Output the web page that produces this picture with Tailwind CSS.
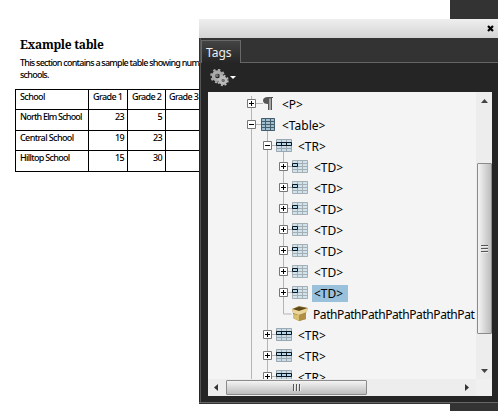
<!DOCTYPE html>
<html lang="en"><head><meta charset="utf-8"><title>Tags panel</title>
<script src="https://cdn.jsdelivr.net/npm/@tailwindcss/browser@4"></script></head>
<body class="relative h-[411px] w-[498px] overflow-hidden bg-white text-black">
<svg class="hidden">
  <symbol id="plus" viewBox="0 0 9 9"><path d="M.5.5h8v8h-8z" fill="#fff" stroke="#777"/><path d="M2 4.5h5M4.5 2v5" stroke="#000"/></symbol>
  <symbol id="minus" viewBox="0 0 9 9"><path d="M.5.5h8v8h-8z" fill="#fff" stroke="#777"/><path d="M2 4.5h5" stroke="#000"/></symbol>
  <symbol id="tr" viewBox="0 0 16 13"><path d="M0 0h16v13H0z" fill="#c9dce8"/><path d="M.5.5h15v12H.5zM5.500 0v13M10.500 0v13M0 9.500h16" fill="none" stroke="#9aa9b1"/><path d="M.5 3.500h15v3H.5zM5.500 3v4M10.500 3v4" fill="#b4d4e8" stroke="#0a1620"/></symbol>
  <symbol id="td" viewBox="0 0 16 13"><path d="M0 0h16v13H0z" fill="#d3e3eb"/><path d="M.5.500h15v12H.5zM5.500 0v13M10.500 0v13M0 3.500h16M0 6.500h16M0 9.500h16" fill="none" stroke="#a3afb4"/><path d="M.5 3.500h5v3h-5z" fill="#b4d9ee" stroke="#0a1620"/></symbol>
</svg>
<main class="h-[411px] w-[199px] overflow-hidden pl-[15px] pt-[36px] font-['Noto_Sans',sans-serif] text-[9px] font-medium">
  <h1 class="h-[20px] w-[120px] whitespace-nowrap pl-[5px] font-['Noto_Serif','DejaVu_Serif','Liberation_Serif',serif] text-[12px] font-bold leading-[18px] tracking-[-0.3px]">Example table</h1>
  <p class="h-[33px] whitespace-nowrap pl-[5px] pt-px leading-[11.500px] tracking-[-0.76px]">This section contains a sample table showing num<br>schools.</p>
  <div class="grid w-[190px] grid-cols-[73px_39px_38px_40px] grid-rows-[20px_21px_20px_21px] border-b border-l border-black leading-[13px] tracking-[-0.6px] whitespace-nowrap *:border-t *:border-r *:border-black">
    <div class="pl-1">School</div><div class="pl-1">Grade 1</div><div class="pl-1">Grade 2</div><div class="pl-[3px]">Grade 3</div>
    <div class="pl-1 tracking-[-0.8px]">North Elm School</div><div class="pr-[3px] text-right">23</div><div class="pr-[3px] text-right">5</div><div></div>
    <div class="pl-1">Central School</div><div class="pr-[3px] text-right">19</div><div class="pr-[3px] text-right">23</div><div></div>
    <div class="pl-1 tracking-[-0.7px]">Hilltop School</div><div class="pr-[3px] text-right">15</div><div class="pr-[3px] text-right">30</div><div></div>
  </div>
</main>
<div class="absolute right-0 top-0 h-[411px] w-[48px] bg-[#333]"></div>
<section class="absolute left-[199px] top-[19px] flex h-[385px] w-[299px] flex-col bg-[#252525] font-['Noto_Sans',sans-serif] text-[12px]">
  <div class="flex h-[19px] shrink-0 items-center justify-end bg-linear-to-b from-[#efefef] to-[#d4d4d4] pr-[4px]">
    <svg class="h-[7px] w-[7px]" viewBox="0 0 7 7"><path d="M1 1l5 5M6 1L1 6" stroke="#000" stroke-width="2.200"/></svg>
  </div>
  <div class="flex h-[25px] shrink-0 bg-[#333] pt-[2px]">
    <div class="w-[2px] border-b border-[#666]"></div>
    <div class="w-[40px] border-l border-r border-t border-[#686868] bg-linear-to-b from-[#444] to-[#252525] pl-[4px] text-[12px] leading-[23px] text-[#eee]">Tags</div>
    <div class="flex-1 border-b border-[#666]"></div>
  </div>
  <div class="flex h-[29px] shrink-0 items-center pl-[11px]">
    <svg class="h-[18px] w-[19px]" viewBox="0 0 19 18">
      <g fill="none" stroke="#aaa"><circle cx="7.500" cy="7" r="4" stroke-width="3.500"/><circle cx="7.500" cy="7" r="6.300" stroke-width="2" stroke-dasharray="2.400 2.500"/></g>
      <g fill="none" stroke="#bbb"><circle cx="13" cy="11.500" r="3" stroke-width="2.800"/><circle cx="13" cy="11.500" r="4.800" stroke-width="1.800" stroke-dasharray="1.900 1.870"/></g><circle cx="7" cy="6.500" r="1.500" fill="#777"/><circle cx="13" cy="11.500" r="1.400" fill="#777"/>
    </svg>
    <svg class="ml-px h-[3px] w-[6px]" viewBox="0 0 6 3"><path d="M0 0h6L3 3z" fill="#fff"/></svg>
  </div>
  <div class="ml-[9px] grid h-[304px] w-[284px] grid-cols-[268px_16px] grid-rows-[287px_17px] bg-[#f4f4f4]">
    <div class="relative overflow-hidden">
      <svg class="absolute left-0 top-0 h-[287px] w-[268px]" viewBox="0 0 268 287"><path d="M43.500 4v283M59.500 38v249M75.500 59v163h8M47 11.500h8M47 32.500h7M63 53.500h5M79 74.500h5M79 95.500h5M79 116.500h5M79 137.500h5M79 158.500h5M79 179.500h5M79 200.500h5M63 242.500h5M63 263.500h5M63 284.500h5" fill="none" stroke="#b5b5b5"/></svg>
      <div class="relative flex flex-col pt-px whitespace-nowrap *:flex *:h-[21px] *:shrink-0 *:items-center">
        <div class="pl-[39px]"><svg class="h-[9px] w-[9px]"><use href="#plus"/></svg><svg class="ml-[6px] h-[13px] w-[12px]" viewBox="0 0 12 13"><path d="M6 0h5v1h-1v12H8.500V1.500h-1V13H6V7Q1 7 1 3.500 1 0 6 0" fill="#555"/></svg><span class="ml-[8px] pt-[3px]">&lt;P&gt;</span></div>
        <div class="pl-[39px]"><svg class="h-[9px] w-[9px]"><use href="#minus"/></svg><svg class="ml-[5px] h-[13px] w-[14px]" viewBox="0 0 14 13"><path d="M0 0h14v13H0z" fill="#9fc0d3"/><path d="M.5.500h13v12H.5zM4.500 0v13M9.500 0v13M0 3.500h14M0 6.500h14M0 9.500h14" fill="none" stroke="#455c6a"/></svg><span class="ml-[7px] pt-[3px]">&lt;Table&gt;</span></div>
        <div class="pl-[55px]"><svg class="h-[9px] w-[9px]"><use href="#minus"/></svg><svg class="ml-[4px] h-[13px] w-[16px]"><use href="#tr"/></svg><span class="ml-[6px] pt-[3px]">&lt;TR&gt;</span></div>
        <div class="pl-[71px]"><svg class="h-[9px] w-[9px]"><use href="#plus"/></svg><svg class="ml-[4px] h-[13px] w-[16px]"><use href="#td"/></svg><span class="ml-[6px] pt-[3px]">&lt;TD&gt;</span></div>
        <div class="pl-[71px]"><svg class="h-[9px] w-[9px]"><use href="#plus"/></svg><svg class="ml-[4px] h-[13px] w-[16px]"><use href="#td"/></svg><span class="ml-[6px] pt-[3px]">&lt;TD&gt;</span></div>
        <div class="pl-[71px]"><svg class="h-[9px] w-[9px]"><use href="#plus"/></svg><svg class="ml-[4px] h-[13px] w-[16px]"><use href="#td"/></svg><span class="ml-[6px] pt-[3px]">&lt;TD&gt;</span></div>
        <div class="pl-[71px]"><svg class="h-[9px] w-[9px]"><use href="#plus"/></svg><svg class="ml-[4px] h-[13px] w-[16px]"><use href="#td"/></svg><span class="ml-[6px] pt-[3px]">&lt;TD&gt;</span></div>
        <div class="pl-[71px]"><svg class="h-[9px] w-[9px]"><use href="#plus"/></svg><svg class="ml-[4px] h-[13px] w-[16px]"><use href="#td"/></svg><span class="ml-[6px] pt-[3px]">&lt;TD&gt;</span></div>
        <div class="pl-[71px]"><svg class="h-[9px] w-[9px]"><use href="#plus"/></svg><svg class="ml-[4px] h-[13px] w-[16px]"><use href="#td"/></svg><span class="ml-[6px] pt-[3px]">&lt;TD&gt;</span></div>
        <div class="pl-[71px]"><svg class="h-[9px] w-[9px]"><use href="#plus"/></svg><svg class="ml-[4px] h-[13px] w-[16px]"><use href="#td"/></svg><span class="mt-px ml-[4px] h-[17px] w-[36px] bg-[#99c1dc] pl-[2px] leading-[18px]">&lt;TD&gt;</span></div>
        <div class="pl-[84px]"><svg class="h-[15px] w-[16px] shrink-0" viewBox="0 0 16 15"><path d="M0 3l7-3 9 2-2 5v6l-7 2-6-3V7z" fill="#9b7c35"/><path d="M1 3l6-2 8 1-8 3z" fill="#5d481a"/><path d="M0 3l7 2v4L1 7zM7 5l9-3-1 4-8 3z" fill="#ead69a"/><path d="M1 8l6 1v6l-6-3z" fill="#d9bf72"/><path d="M7 9l7-2v6l-7 2z" fill="#b09045"/></svg><span class="ml-[5px] w-[163px] overflow-hidden pt-[2px] tracking-[-0.42px]">PathPathPathPathPathPathPat</span></div>
        <div class="pl-[55px]"><svg class="h-[9px] w-[9px]"><use href="#plus"/></svg><svg class="ml-[4px] h-[13px] w-[16px]"><use href="#tr"/></svg><span class="ml-[6px] pt-[3px]">&lt;TR&gt;</span></div>
        <div class="pl-[55px]"><svg class="h-[9px] w-[9px]"><use href="#plus"/></svg><svg class="ml-[4px] h-[13px] w-[16px]"><use href="#tr"/></svg><span class="ml-[6px] pt-[3px]">&lt;TR&gt;</span></div>
        <div class="pl-[55px]"><svg class="h-[9px] w-[9px]"><use href="#plus"/></svg><svg class="ml-[4px] h-[13px] w-[16px]"><use href="#tr"/></svg><span class="ml-[6px] pt-[3px]">&lt;TR&gt;</span></div>
      </div>
    </div>
    <div class="flex flex-col items-center bg-[#ededed]">
      <svg class="mt-[7px] h-[4px] w-[7px] shrink-0" viewBox="0 0 7 4"><path d="M0 4h7L3.500 0z" fill="#444"/></svg>
      <div class="mt-[60px] flex h-[171px] w-[15px] shrink-0 items-center justify-center rounded-[1px] border border-[#8b8b8b] bg-linear-to-r from-[#f4f4f4] to-[#bdbdbd]"><svg class="h-[8px] w-[7px]" viewBox="0 0 7 8"><path d="M0 .500h7M0 3.500h7M0 6.500h7" stroke="#555"/><path d="M1 1.500h6M1 4.500h6M1 7.500h6" stroke="#eee"/></svg></div>
      <svg class="mt-[35px] h-[4px] w-[7px] shrink-0" viewBox="0 0 7 4"><path d="M0 0h7L3.500 4z" fill="#444"/></svg>
    </div>
    <div class="flex items-center bg-[#ededed]">
      <svg class="ml-[6px] h-[7px] w-[4px]" viewBox="0 0 4 7"><path d="M4 0v7L0 3.500z" fill="#333"/></svg>
      <div class="ml-[8px] flex h-[15px] w-[141px] items-center justify-center rounded-[1px] border border-[#8b8b8b] bg-linear-to-b from-[#f4f4f4] to-[#bdbdbd]"><svg class="h-[7px] w-[8px]" viewBox="0 0 8 7"><path d="M.500 0v7M3.500 0v7M6.500 0v7" stroke="#555"/><path d="M1.500 1v6M4.500 1v6M7.500 1v6" stroke="#eee"/></svg></div>
      <svg class="ml-[98px] h-[7px] w-[4px]" viewBox="0 0 4 7"><path d="M0 0v7l4-3.500z" fill="#333"/></svg>
    </div>
    <div class="bg-[#f0f0f0]"></div>
  </div>
  <div class="mt-[6px] h-px bg-[#666]"></div>
  <div class="h-px bg-[#333]"></div>
</section>
<div class="absolute left-[200px] top-[38px] h-[364px] w-px bg-[#555]"></div>
</body></html>
